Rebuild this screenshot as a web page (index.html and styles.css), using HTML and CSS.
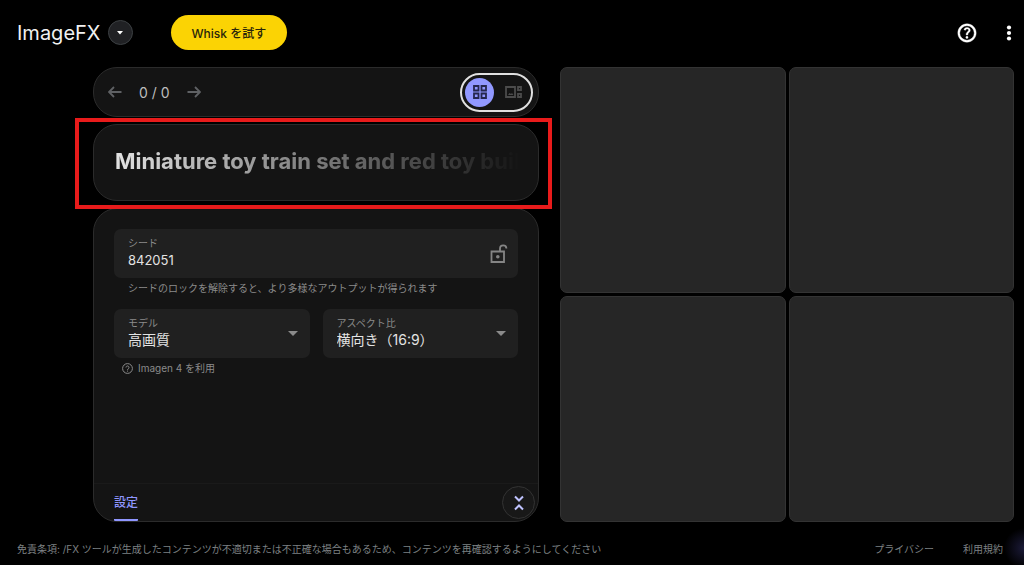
FILE: index.html
```html
<!DOCTYPE html>
<html lang="ja">
<head>
<meta charset="utf-8">
<meta name="viewport" content="width=device-width, initial-scale=1">
<title>ImageFX</title>
<link rel="stylesheet" href="styles.css">
</head>
<body class="page">
<header class="header">
  <span class="brand">ImageFX</span>
  <button class="brand-menu" type="button" aria-label="ツールを切り替え">
    <svg width="8" height="4" viewBox="0 0 8 4"><path d="M1 0h6L4 3.5z" fill="currentColor"/></svg>
  </button>
  <button class="whisk" type="button">Whisk を試す</button>
  <div class="header-actions">
    <button class="icon-button" type="button" aria-label="ヘルプ">
      <svg width="22" height="22" viewBox="0 0 24 24" fill="currentColor"><path d="M11.95 18c.35 0 .65-.12.89-.36s.36-.54.36-.89-.12-.65-.36-.89-.54-.36-.89-.36-.65.12-.89.36-.36.54-.36.89.12.65.36.89.54.36.89.36zm-.9-3.85h1.85c0-.55.06-.98.19-1.3s.48-.75 1.06-1.3c.43-.43.77-.85 1.03-1.24s.37-.87.37-1.43c0-.95-.35-1.68-1.05-2.19S13 5.93 12.1 5.93c-.92 0-1.66.24-2.24.72s-.97 1.06-1.19 1.73l1.65.65c.08-.3.26-.62.55-.97s.71-.53 1.28-.53c.52 0 .9.14 1.16.42s.39.59.39.93c0 .32-.1.61-.29.89s-.43.54-.71.79c-.7.62-1.13 1.08-1.29 1.4s-.36.86-.36 2.19zM12 22C6.48 22 2 17.52 2 12S6.48 2 12 2s10 4.480 10 10-4.480 10-10 10zm0-2.100a7.900 7.900 0 1 0 0-15.800 7.900 7.900 0 0 0 0 15.800z" stroke="currentColor" stroke-width=".4"/></svg>
    </button>
    <button class="icon-button" type="button" aria-label="その他">
      <svg width="6" height="16" viewBox="0 0 6 16" fill="currentColor"><circle cx="3" cy="2.500" r="2.100"/><circle cx="3" cy="8" r="2.100"/><circle cx="3" cy="13.500" r="2.100"/></svg>
    </button>
  </div>
</header>

<main class="workspace">
  <section class="controls">
    <nav class="panel pager">
      <button class="arrow" type="button" aria-label="前へ">
        <svg width="14" height="12" viewBox="0 0 14 12"><path d="M13.500 6H1.500M6 1L1 6l5 5"/></svg>
      </button>
      <span class="count">0 / 0</span>
      <button class="arrow" type="button" aria-label="次へ">
        <svg width="14" height="12" viewBox="0 0 14 12"><path d="M.5 6h12M8 1l5 5-5 5"/></svg>
      </button>
      <div class="view-switch">
        <button class="view active" type="button" aria-label="グリッド表示">
          <svg width="14" height="14" viewBox="0 0 14 14"><path d="M1 1h4.500v4.500H1zM8.500 1H13v4.500H8.500zM1 8.500h4.500V13H1zM8.500 8.500H13V13H8.500z"/></svg>
        </button>
        <button class="view" type="button" aria-label="詳細表示">
          <svg width="17" height="12" viewBox="0 0 17 12"><path d="M1 1h9v10H1zM13 1h3v3.200h-3zM13 7.800h3V11h-3z"/><path d="M3 9l1.500-2L6 8l1-1 1.500 2z" class="solid"/></svg>
        </button>
      </div>
    </nav>

    <div class="panel prompt">
      <input class="prompt-text" type="text" aria-label="プロンプト" value="Miniature toy train set and red toy buildings">
    </div>

    <form class="panel settings">
      <div class="fields">
        <div class="field-group wide">
          <div class="field">
            <div class="field-body">
              <label class="field-label" for="seed">シード</label>
              <input class="field-value seed" id="seed" type="text" value="842051">
            </div>
            <button class="lock" type="button" aria-label="シードをロック">
              <svg width="18" height="20" viewBox="0 0 18 20"><path d="M1.500 7.500h12.500v10.500H1.500zM10 7.500V4.500a3.200 3.200 0 0 1 6.400 0"/><circle cx="7.800" cy="12.700" r="1.800" class="solid"/></svg>
            </button>
          </div>
          <p class="hint">シードのロックを解除すると、より多様なアウトプットが得られます</p>
        </div>
        <div class="field-group">
          <div class="field">
            <div class="field-body">
              <label class="field-label" for="model">モデル</label>
              <select class="field-value" id="model"><option>高画質</option></select>
            </div>
            <svg class="caret" width="10" height="5" viewBox="0 0 10 5"><path d="M0 0h10L5 5z" fill="currentColor"/></svg>
          </div>
          <p class="hint with-icon">
            <svg width="11" height="11" viewBox="0 0 11 11"><circle cx="5.500" cy="5.500" r="4.900"/><path d="M4 4.500a1.500 1.500 0 1 1 2.500 1.100c-.6.500-1 .7-1 1.400M5.500 7.600v1"/></svg>
            Imagen 4 を利用
          </p>
        </div>
        <div class="field-group">
          <div class="field">
            <div class="field-body">
              <label class="field-label" for="ratio">アスペクト比</label>
              <select class="field-value" id="ratio"><option>横向き（16:9）</option></select>
            </div>
            <svg class="caret" width="10" height="5" viewBox="0 0 10 5"><path d="M0 0h10L5 5z" fill="currentColor"/></svg>
          </div>
        </div>
      </div>
      <div class="tabs">
        <button class="tab" type="button">設定</button>
        <button class="collapse" type="button" aria-label="折りたたむ">
          <svg width="10" height="16" viewBox="0 0 10 16"><path d="M1 1.500l4 4 4-4M1 14.500l4-4 4 4"/></svg>
        </button>
      </div>
    </form>
  </section>

  <section class="results" aria-label="生成結果">
    <div class="tile"></div>
    <div class="tile"></div>
    <div class="tile"></div>
    <div class="tile"></div>
  </section>
</main>

<footer class="footer">
  <p class="notice">免責条項: /FX ツールが生成したコンテンツが不適切または不正確な場合もあるため、コンテンツを再確認するようにしてください</p>
  <a class="footer-link" href="#privacy">プライバシー</a>
  <a class="footer-link" href="#terms">利用規約</a>
</footer>
</body>
</html>
```
FILE: styles.css
```css
* {
  box-sizing: border-box;
}

.page {
  margin: 0;
  min-height: 100vh;
  display: flex;
  flex-direction: column;
  background: radial-gradient(circle at 100% 97%, #1b1a38 0, #000 20px) #000;
  color: #e3e3e3;
  font-family: Inter, "Noto Sans CJK JP", sans-serif;
  font-size: 12px;
}

button,
input,
select {
  margin: 0;
  padding: 0;
  border: 0;
  background: none;
  color: inherit;
  font: inherit;
}

p {
  margin: 0;
}

svg {
  display: block;
  flex: none;
}

.header {
  display: flex;
  align-items: center;
  height: 67px;
  padding: 0 12px 2px 17px;
}

.brand {
  font-size: 20px;
  color: #f1f1f1;
}

.brand-menu {
  display: grid;
  place-items: center;
  width: 25px;
  height: 25px;
  margin-left: 7px;
  border: 1px solid #3c4043;
  border-radius: 50%;
  background: #202124;
  color: #fff;
}

.whisk {
  height: 35px;
  margin-left: 38px;
  padding: 0 21px;
  border-radius: 18px;
  background: #fbd304;
  color: #29250a;
  font-size: 12px;
  font-weight: 500;
}

.header-actions {
  display: flex;
  align-items: center;
  gap: 28px;
  margin-left: auto;
}

.icon-button {
  color: #fff;
}

.workspace {
  flex: 1;
  display: grid;
  grid-template-columns: 446fr 454fr;
  gap: 21px;
  padding: 0 10px 0 93px;
}

.controls {
  display: flex;
  flex-direction: column;
  gap: 7px;
  min-width: 0;
}

.panel {
  border: 1px solid #2b2b2b;
  border-radius: 24px;
  background: #141414;
}

.pager {
  display: flex;
  align-items: center;
  height: 50px;
  padding: 0 5px 0 14px;
}

.arrow {
  color: #5f6164;
}

.arrow path,
.view path,
.lock path,
.with-icon svg,
.collapse path {
  fill: none;
  stroke: currentColor;
  stroke-width: 1.8;
}

.count {
  margin: 0 17px;
  color: #bdbdbd;
  font-size: 14px;
}

.view-switch {
  display: flex;
  align-items: center;
  gap: 5px;
  height: 39px;
  margin-left: auto;
  padding: 0 3px;
  border: 2px solid #e0e0e0;
  border-radius: 20px;
}

.view {
  display: grid;
  place-items: center;
  width: 29px;
  height: 29px;
  border-radius: 50%;
  color: #4c4c4c;
}

.view.active {
  background: #9198ff;
  color: #25274d;
}

.view .solid,
.lock .solid {
  fill: currentColor;
  stroke: none;
}

.prompt {
  position: relative;
  height: 77px;
  padding: 16px 17px 20px 21px;
}

.prompt::after {
  content: "";
  position: absolute;
  inset: -7px -14px -9px -19px;
  border: 4px solid #e81b1b;
  pointer-events: none;
}

.prompt-text {
  display: block;
  width: 100%;
  height: 40px;
  font-size: 22px;
  font-weight: 700;
  -webkit-mask-image: linear-gradient(90deg, #000, transparent);
  mask-image: linear-gradient(90deg, #000, transparent);
}

.settings {
  flex: 1;
  display: flex;
  flex-direction: column;
  justify-content: space-between;
}

.fields {
  display: grid;
  grid-template-columns: 1fr 1fr;
  gap: 13px;
  padding: 20px 20px 0;
}

.wide {
  grid-column: 1 / -1;
}

.field {
  display: flex;
  align-items: center;
  height: 49px;
  padding: 0 12px 0 14px;
  border-radius: 7px;
  background: #202020;
}

.wide .field {
  padding-right: 10px;
}

.field-body {
  flex: 1;
  min-width: 0;
  padding-bottom: 2px;
}

.field-label {
  display: block;
  color: #8b8b8b;
  font-size: 10px;
  line-height: 14px;
}

.field-value {
  display: block;
  width: 100%;
  height: 20px;
  appearance: none;
  font-size: 14px;
  line-height: 20px;
}

.seed {
  font-size: 13px;
}

.lock {
  color: #858585;
}

.caret {
  color: #8b8b8b;
}

.hint {
  padding: 3px 14px 0;
  color: #8b8b8b;
  font-size: 10px;
  line-height: 15px;
}

.with-icon {
  display: flex;
  align-items: center;
  gap: 5px;
  padding: 3px 8px 0;
}

.with-icon svg {
  stroke-width: 1;
}

.tabs {
  display: flex;
  align-items: center;
  justify-content: space-between;
  height: 38px;
  padding: 0 3px 0 20px;
  border-top: 1px solid #1a1a1a;
}

.tab {
  align-self: stretch;
  border-bottom: 2px solid #8f96ff;
  border-radius: 1px;
  color: #8f96ff;
  font-weight: 500;
}

.collapse {
  display: grid;
  place-items: center;
  width: 33px;
  height: 33px;
  border: 1px solid #333;
  border-radius: 50%;
  background: #181818;
  color: #c0c3ff;
}

.collapse path {
  stroke-width: 2;
}

.results {
  display: grid;
  grid-template-columns: 1fr 1fr;
  grid-template-rows: 1fr 1fr;
  gap: 3px;
}

.tile {
  border: 1px solid #333;
  border-radius: 7px;
  background: #262626;
}

.footer {
  display: flex;
  align-items: center;
  gap: 29px;
  height: 43px;
  padding: 10px 21px 0 17px;
  color: #7d8083;
  font-size: 10px;
}

.notice {
  flex: 1;
}

.footer-link {
  color: inherit;
  text-decoration: none;
}
```
